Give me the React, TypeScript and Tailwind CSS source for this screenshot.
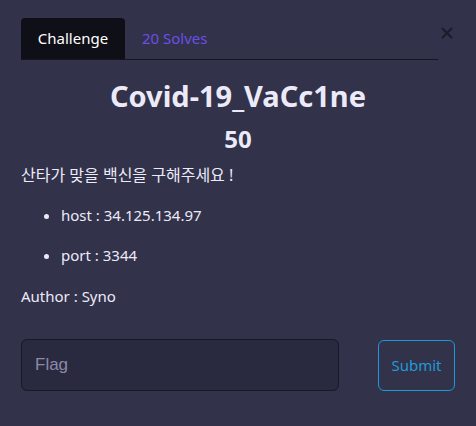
import React from "react";

const FONT = '"Noto Sans", "Noto Sans CJK KR", sans-serif';

export default function App() {
  return (
    <div
      className="w-[476px] h-[426px] bg-[#32324a] text-[#eceaf8] overflow-hidden"
      style={{ fontFamily: FONT }}
    >
      <div className="px-[21px] pt-[18px]">
        <div className="flex items-start">
          <div className="flex w-[417px] items-end border-b border-[#15151f]">
            <div className="h-[41px] w-[104px] flex items-center justify-center rounded-t-[4px] bg-[#0f0f17] text-[15px] text-white">
              Challenge
            </div>
            <div className="h-[41px] flex items-center pl-[17px] text-[15px] text-[#6a4fe6]">
              20 Solves
            </div>
          </div>
          <button className="ml-[3px] mt-[9px] leading-none">
            <svg width="12" height="12" viewBox="0 0 12 12">
              <path d="M1 1 L11 11 M11 1 L1 11" stroke="#1c1c2b" strokeWidth="2.2" />
            </svg>
          </button>
        </div>

        <h1 className="mt-[16px] text-center text-[29px] font-bold leading-[40px]">
          Covid-19_VaCc1ne
        </h1>
        <h2 className="text-center text-[24px] font-bold leading-[34px] mt-[6px]">50</h2>

        <p className="mt-[8px] text-[16px] leading-[22px]">산타가 맞을 백신을 구해주세요 !</p>

        <ul className="mt-[18px] pl-[40px] list-disc text-[15px] space-y-[18px] leading-[22px]">
          <li>host : 34.125.134.97</li>
          <li>port : 3344</li>
        </ul>

        <p className="mt-[19px] text-[15px] leading-[22px]">Author : Syno</p>

        <div className="mt-[32px] flex items-center">
          <input
            placeholder="Flag"
            className="w-[318px] h-[52px] rounded-[6px] bg-[#29293f] border border-[#181826] px-[13px] text-[17px] placeholder:text-[#8b8aa8] outline-none"
            style={{ fontFamily: '"Liberation Sans", Arial, sans-serif' }}
          />
          <button className="ml-auto w-[77px] h-[51px] rounded-[6px] border border-[#1a9ad8] text-[#1f9ad8] text-[15px]">
            Submit
          </button>
        </div>
      </div>
    </div>
  );
}
